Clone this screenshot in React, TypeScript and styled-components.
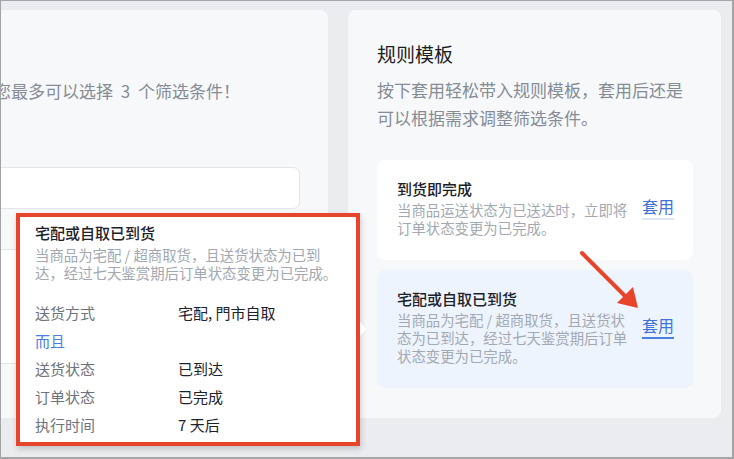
import React from "react";
import styled, { createGlobalStyle } from "styled-components";

const GlobalStyle = createGlobalStyle`
  html, body {
    margin: 0;
    padding: 0;
    background: #ebecef;
  }
  body {
    font-family: "Noto Sans CJK SC", "Noto Sans", sans-serif;
    -webkit-font-smoothing: antialiased;
  }
  * { box-sizing: border-box; }
`;

const Frame = styled.div`
  position: relative;
  width: 734px;
  height: 459px;
  overflow: hidden;
  background: #ebecef;
  border-style: solid;
  border-color: #a3a4a6;
  border-width: 1px 2px 2px 1px;
`;

const Columns = styled.div`
  display: flex;
  gap: 20px;
  padding-top: 9px;
`;

const Panel = styled.section<{ $width: number; $offset?: number; $top?: number }>`
  width: ${(p) => p.$width}px;
  height: 408px;
  flex: none;
  margin-left: ${(p) => p.$offset ?? 0}px;
  background: #f7f8fa;
  border-radius: 8px;
  padding: ${(p) => p.$top ?? 31}px 28px 0 29px;
  display: flex;
  flex-direction: column;
`;

const PanelTitle = styled.h2`
  margin: 0;
  font-size: 19px;
  line-height: 26px;
  font-weight: 400;
  color: #1a1d24;
`;

const PanelText = styled.p<{ $top: number }>`
  margin: ${(p) => p.$top}px 0 0;
  font-size: 17px;
  line-height: 28px;
  color: #858c96;
  white-space: nowrap;
  word-spacing: 4px;
`;

const FieldBox = styled.div<{ $height: number; $top: number }>`
  height: ${(p) => p.$height}px;
  margin-top: ${(p) => p.$top}px;
  background: #ffffff;
  border: 1px solid #e1e4e9;
  border-radius: 7px;
`;

const CardList = styled.div`
  display: flex;
  flex-direction: column;
  gap: 10px;
  margin-top: 28px;
`;

const Card = styled.div<{ $active?: boolean }>`
  display: flex;
  align-items: center;
  gap: 9px;
  padding: 19px 19px 23px 20px;
  border-radius: 8px;
  background: ${(p) => (p.$active ? "#eef4fe" : "#ffffff")};
`;

const CardBody = styled.div`
  flex: 1;
  min-width: 0;
`;

const CardTitle = styled.div`
  font-size: 15px;
  line-height: 20px;
  font-weight: 500;
  color: #1d2129;
`;

const CardDesc = styled.div`
  margin-top: 2px;
  font-size: 14.4px;
  line-height: 18px;
  color: #a3a9b2;
`;

const ApplyLink = styled.a<{ $active?: boolean }>`
  flex: none;
  font-size: 16px;
  line-height: 20px;
  padding-bottom: 2px;
  color: #3f72d8;
  text-decoration: none;
  border-bottom: 2px solid ${(p) => (p.$active ? "#4a7ee0" : "#dfe7f6")};
  cursor: pointer;
`;

const Popover = styled.div`
  position: absolute;
  left: 15px;
  top: 212px;
  width: 344px;
  height: 233px;
  background: #ffffff;
  border: 4px solid #e6452b;
  box-shadow: 1px 3px 6px rgba(0, 0, 0, 0.18);
  padding: 6px 15px 0 15px;

  &::after {
    content: "";
    position: absolute;
    left: calc(100% + 4px);
    top: 105px;
    border-left: 6px solid #ffffff;
    border-top: 7px solid transparent;
    border-bottom: 7px solid transparent;
  }
`;

const PopTitle = styled.div`
  font-size: 15px;
  line-height: 20px;
  font-weight: 500;
  color: #1d2129;
`;

const PopDesc = styled.div`
  margin-top: 3px;
  font-size: 14.4px;
  line-height: 18px;
  color: #a2a8b1;
`;

const RuleGrid = styled.div`
  display: grid;
  grid-template-columns: 143px 1fr;
  grid-auto-rows: 27.8px;
  align-items: center;
  margin-top: 17px;
  font-size: 15px;
`;

const RuleLabel = styled.span`
  color: #6d737d;
`;

const RuleValue = styled.span`
  color: #1d2129;
`;

const Joiner = styled.span`
  grid-column: 1 / -1;
  color: #4a7ee0;
`;

const Pointer = styled.svg`
  position: absolute;
  left: 0;
  top: 0;
  pointer-events: none;
`;

type Template = {
  title: string;
  desc: string;
  active?: boolean;
};

const templates: Template[] = [
  { title: "到货即完成", desc: "当商品运送状态为已送达时，立即将订单状态变更为已完成。" },
  {
    title: "宅配或自取已到货",
    desc: "当商品为宅配 / 超商取货，且送货状态为已到达，经过七天鉴赏期后订单状态变更为已完成。",
    active: true,
  },
];

const rules: Array<[string, string] | "and"> = [
  ["送货方式", "宅配, 門市自取"],
  "and",
  ["送货状态", "已到达"],
  ["订单状态", "已完成"],
  ["执行时间", "7 天后"],
];

export default function App() {
  return (
    <>
      <GlobalStyle />
      <Frame>
        <Columns>
          <Panel $width={363} $offset={-36} $top={67}>
            <PanelText $top={0}>您最多可以选择 3 个筛选条件！</PanelText>
            <FieldBox $height={42} $top={62} />
            <FieldBox $height={115} $top={40} />
          </Panel>

          <Panel $width={373}>
            <PanelTitle>规则模板</PanelTitle>
            <PanelText $top={9}>
              按下套用轻松带入规则模板，套用后还是
              <br />
              可以根据需求调整筛选条件。
            </PanelText>
            <CardList>
              {templates.map((t) => (
                <Card key={t.title} $active={t.active}>
                  <CardBody>
                    <CardTitle>{t.title}</CardTitle>
                    <CardDesc>{t.desc}</CardDesc>
                  </CardBody>
                  <ApplyLink $active={t.active}>套用</ApplyLink>
                </Card>
              ))}
            </CardList>
          </Panel>
        </Columns>

        <Popover>
          <PopTitle>宅配或自取已到货</PopTitle>
          <PopDesc>当商品为宅配 / 超商取货，且送货状态为已到达，经过七天鉴赏期后订单状态变更为已完成。</PopDesc>
          <RuleGrid>
            {rules.map((r, i) =>
              r === "and" ? (
                <Joiner key={i}>而且</Joiner>
              ) : (
                <React.Fragment key={i}>
                  <RuleLabel>{r[0]}</RuleLabel>
                  <RuleValue>{r[1]}</RuleValue>
                </React.Fragment>
              )
            )}
          </RuleGrid>
        </Popover>

        <Pointer width="734" height="459" viewBox="0 0 734 459">
          <line x1="581" y1="252" x2="624" y2="295" stroke="#e6452b" strokeWidth="4" strokeLinecap="round" />
          <polygon points="637,307 616,302 632,286" fill="#e6452b" />
        </Pointer>
      </Frame>
    </>
  );
}
